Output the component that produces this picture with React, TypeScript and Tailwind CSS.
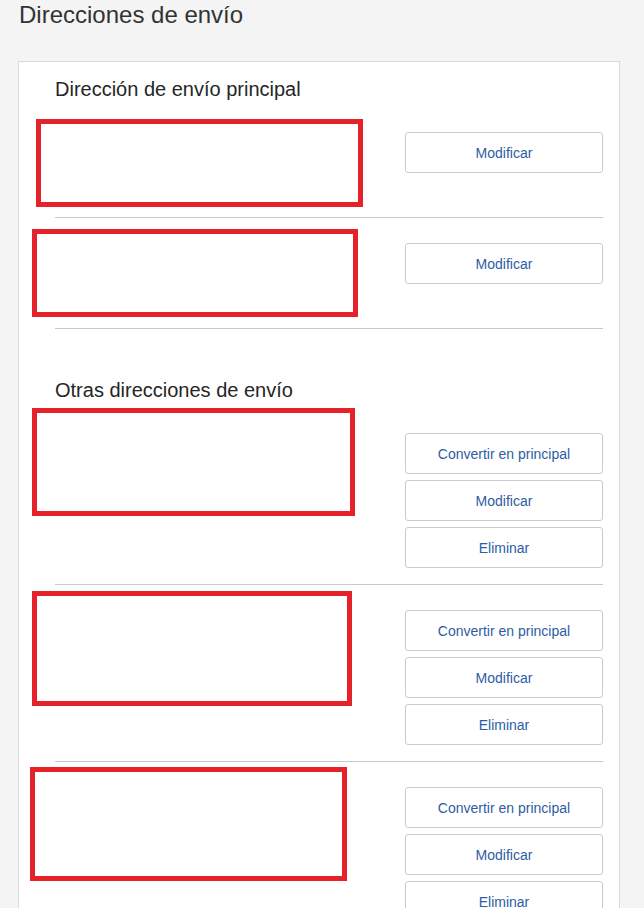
import React from "react";

type Row = { buttons: string[]; box: { top: number; left: number; w: number; h: number } };

const principal: Row[] = [
  { buttons: ["Modificar"], box: { top: 12, left: -19, w: 327, h: 88 } },
  { buttons: ["Modificar"], box: { top: 11, left: -23, w: 326, h: 88 } },
];

const others: Row[] = [
  { buttons: ["Convertir en principal", "Modificar", "Eliminar"], box: { top: 0, left: -23, w: 323, h: 108 } },
  { buttons: ["Convertir en principal", "Modificar", "Eliminar"], box: { top: 6, left: -23, w: 320, h: 115 } },
  { buttons: ["Convertir en principal", "Modificar", "Eliminar"], box: { top: 5, left: -25, w: 317, h: 114 } },
];

function AddressRow({ row, tall }: { row: Row; tall?: boolean }) {
  return (
    <div className={`relative flex justify-end border-b border-[#c8c8c8] pt-[25px] ${tall ? "pb-[44px]" : "pb-[16px]"}`}>
      {/* redaction box over the address text */}
      <div
        className="absolute border-[5px] border-[#e5222a]"
        style={{ top: row.box.top, left: row.box.left, width: row.box.w, height: row.box.h }}
      />
      <div className="flex flex-col gap-[6px]">
        {row.buttons.map(b => (
          <button
            key={b}
            className="w-[198px] h-[41px] pt-[2px] bg-white border border-[#cbcbcb] rounded-[3px] text-[14px] text-[#2d5da3]"
          >
            {b}
          </button>
        ))}
      </div>
    </div>
  );
}

export default function App() {
  return (
    <div className="min-h-screen bg-[#f4f4f4] pl-[18px] pr-[24px] pb-10 font-['Liberation_Sans',Arial,sans-serif]">
      <h1 className="text-[24px] leading-[30px] text-[#333] font-normal pl-px">Direcciones de envío</h1>

      <div className="mt-[31px] bg-white border border-[#dadada] pl-[36px] pr-[16px] pt-[15px] pb-[20px]">
        <h2 className="text-[20px] leading-[24px] text-[#262626] mb-[6px]">Dirección de envío principal</h2>
        {principal.map((r, i) => (
          <AddressRow key={i} row={r} tall />
        ))}

        <h2 className="mt-[49px] text-[20px] leading-[24px] text-[#262626] mb-[6px]">Otras direcciones de envío</h2>
        {others.map((r, i) => (
          <AddressRow key={i} row={r} />
        ))}
      </div>
    </div>
  );
}
